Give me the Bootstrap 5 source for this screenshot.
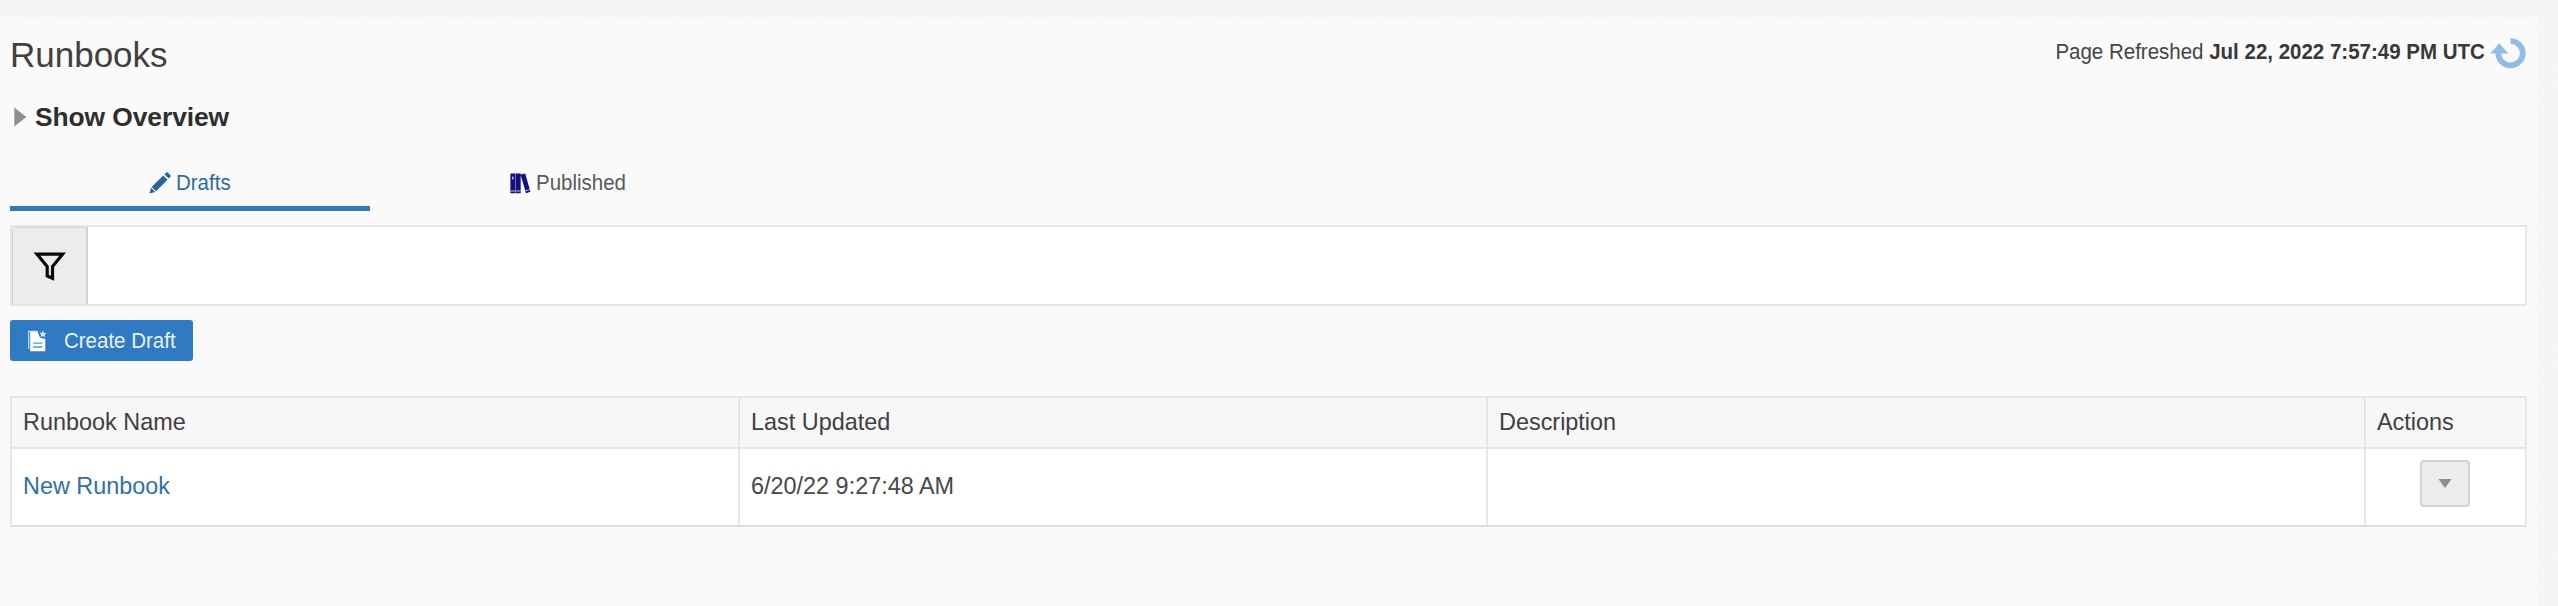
<!DOCTYPE html>
<html lang="en">
<head>
<meta charset="utf-8">
<title>Runbooks</title>
<link href="https://cdn.jsdelivr.net/npm/bootstrap@5.3.0/dist/css/bootstrap.min.css" rel="stylesheet">
<style>
body{font-family:"Liberation Sans",Arial,sans-serif;color:#404040;overflow:hidden;background:repeating-linear-gradient(45deg,#f7f7f7 0 1.5px,#f3f3f3 1.5px 3px)}
.page-panel{margin:17px 21px 0 0;padding:17px 10px 0 10px;height:589px;background:#fafafa}
/* slightly condensed text */
.tight{display:inline-block;transform:scaleX(.94);transform-origin:left center}
.tight-end{transform-origin:right center}
.page-title{font-size:35.9px;line-height:42px;color:#404040;transform:scaleX(.975);transform-origin:left center}
.refreshed{font-size:21.8px;line-height:36px;color:#454545}
.refreshed strong{color:#383838}
.refreshed svg{margin:3px 1px 0 5px}
.overview{margin-top:25px;padding-left:4px;font-size:26.4px;letter-spacing:-.08px;line-height:32px;color:#2e2e2e;gap:8px}
.tabs{margin-top:27px;gap:18px}
.tabs .nav-link{width:360px;height:51px;padding:0;border-radius:0;border-bottom:5px solid transparent;font-size:21.8px;line-height:46px;color:#5a5a5a;gap:5px}
.tabs .nav-link span{margin-right:-5px}
.tabs .nav-link.active{padding-right:2px;color:#2b6da6;border-color:#2f7bc2}
.filter-bar{margin-top:14px;height:81px;border:2px solid #e6e6e6;background:#fff}
.filter-btn{width:76px;border-radius:3px 0 0 0;border:2px solid #d2d2d2;border-width:1px 2px 0 1px;background:#ececec}
.filter-btn svg{margin-top:2px}
.create-btn{margin-top:14px;width:183px;height:41px;padding:0 0 0 18px;border:0;border-radius:3px;background:#2f7ac2;color:#e8f2fb;font-size:21.8px;line-height:41px;gap:17px;white-space:nowrap}
.runbooks{margin-top:35px;table-layout:fixed;border-collapse:separate;border-spacing:0;font-size:24.6px;color:#484848;border:2px solid #e6e6e6;border-bottom-color:#dedede}
.runbooks .tight{transform:scaleX(.952)}
.runbooks th,.runbooks td{padding:0 0 0 11px;border:0 solid #e6e6e6;border-right-width:2px;vertical-align:top;box-shadow:none;color:inherit}
.runbooks tr>:last-child{border-right:0}
.runbooks th{height:51px;line-height:48px;border-bottom-width:2px;background:#f7f7f7;font-weight:400;color:#404040}
.runbooks td{height:76px;line-height:74px;background:#fff}
.runbooks td:last-child{padding:0 2px 0 0}
.runbooks a{color:#3070a8}
.menu-btn{width:50px;height:47px;margin-top:11px;border:2px solid #d2d2d2;border-radius:4px;background:#ececec}
</style>
<script src="https://cdn.jsdelivr.net/npm/bootstrap@5.3.0/dist/js/bootstrap.bundle.min.js"></script>
</head>
<body>
<main class="page-panel">
  <header class="d-flex justify-content-between align-items-start">
    <h1 class="page-title fw-normal m-0">Runbooks</h1>
    <div class="refreshed d-flex align-items-center">
      <span class="tight tight-end">Page Refreshed <strong>Jul 22, 2022 7:57:49 PM UTC</strong></span>
      <svg width="36" height="32" viewBox="0 0 36 32"><path d="M20.5 3A12.2 12.2 0 1 1 8.4 14" fill="none" stroke="#8fbce8" stroke-width="5.7"/><path d="M.3 15.4L9.3 5.2 18.3 15.4Z" fill="#8fbce8"/></svg>
    </div>
  </header>
  <h2 class="overview d-flex align-items-center fw-bold mb-0">
    <svg width="13" height="20" viewBox="0 0 13 20"><path d="M.3.5L12.3 10 .3 19.5Z" fill="#8b8f92"/></svg>Show Overview
  </h2>
  <nav class="tabs nav">
    <a class="nav-link active d-flex justify-content-center align-items-center" href="#"><svg width="22" height="22" viewBox="0 0 22 22" fill="#28659d"><path d="M.5 21.5L2 15.8 6.1 20Z"/><path d="M2.6 14.9L14.2 3.4 18.6 7.8 7 19.3Z"/><path d="M15.4 2.2L17.3.5Q18 0 18.8.6L21.4 3.2Q22 4 21.4 4.7L19.7 6.5Z"/></svg><span class="tight">Drafts</span></a>
    <a class="nav-link d-flex justify-content-center align-items-center" href="#"><svg width="21" height="21" viewBox="0 0 21 21"><path d="M.4.5H5.4V20.3H.4ZM5.8.5H10.7V20.3H5.8ZM10.5 1.6L15.2.4 20.4 18.8 16 20.2Z" fill="#101080"/><path d="M.4 18H5.4M6.1 18H10.7M15.5 17.8L19.7 16.6" stroke="#c5c5e4"/><path d="M2 3.5h1.6v3H2Z" fill="#b8b8dc"/></svg><span class="tight">Published</span></a>
  </nav>
  <div class="filter-bar d-flex">
    <button class="filter-btn d-flex align-items-center justify-content-center p-0" aria-label="Filter"><svg width="34" height="30" viewBox="0 0 34 30"><path d="M4 2.2H29.6L19.5 14.6V26.3L14.2 24V14.6Z" fill="none" stroke="#080808" stroke-width="3.2"/></svg></button>
  </div>
  <button class="create-btn btn d-flex align-items-center"><svg class="flex-shrink-0" width="19" height="22" viewBox="0 0 19 22"><path d="M0 .8H10V2H1.3V19H0Z" fill="#b8d5ef"/><path d="M2.2 1.5H9.5L12 7.8 17.3 9V21.3H2.2Z" fill="#fff"/><path d="M5 13.2H14.5M5 17H14.5" stroke="#5d97cf" stroke-width="1.3"/><path d="M15 .5L16 3 18.8 3.2 16.7 4.8 17 7.4 14.8 6 12.4 7 13.2 4.6 11.4 2.6 14 2.8Z" fill="#d7e8f7"/></svg><span class="tight">Create Draft</span></button>
  <table class="runbooks table mb-0">
    <colgroup><col style="width:728px"><col style="width:748px"><col style="width:878px"><col></colgroup>
    <thead><tr><th><span class="tight">Runbook Name</span></th><th><span class="tight">Last Updated</span></th><th><span class="tight">Description</span></th><th><span class="tight">Actions</span></th></tr></thead>
    <tbody><tr><td><a class="tight text-decoration-none" href="#">New Runbook</a></td><td><span class="tight">6/20/22 9:27:48 AM</span></td><td></td><td><button class="menu-btn d-flex align-items-center justify-content-center mx-auto p-0" aria-label="Actions"><svg width="14" height="9" viewBox="0 0 14 9"><path d="M.5 0H13.5L7 9Z" fill="#8b8f92"/></svg></button></td></tr></tbody>
  </table>
</main>
</body>
</html>
